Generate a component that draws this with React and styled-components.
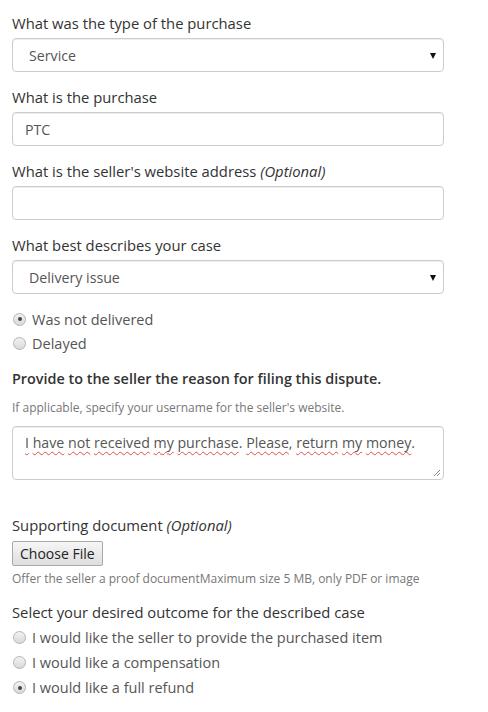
import React from 'react';
import styled, { createGlobalStyle } from 'styled-components';

const GlobalStyle = createGlobalStyle`
  body {
    margin: 0;
    background: #fff;
    font-family: "Open Sans", "Liberation Sans", sans-serif;
    color: #333;
  }
`;

const Form = styled.form`
  width: 432px;
  padding: 13px 12px 0;
  display: flex;
  flex-direction: column;
`;

const Group = styled.div`
  display: flex;
  flex-direction: column;
  margin-bottom: ${props => props.$mb ?? 15}px;
`;

const Label = styled.label`
  font-size: ${props => (props.$strong ? 14.4 : 14.8)}px;
  line-height: 20px;
  color: #333;
  margin-bottom: ${props => props.$mb ?? 5}px;
  font-weight: ${props => (props.$strong ? 600 : 400)};
  white-space: nowrap;
  em {
    font-style: italic;
  }
`;

const Field = styled.div`
  position: relative;
  height: 34px;
  box-sizing: border-box;
  border: 1px solid #ccc;
  border-radius: 4px;
  box-shadow: inset 0 1px 1px rgba(0, 0, 0, 0.075);
  display: flex;
  align-items: center;
  padding-left: ${props => (props.$select ? 16 : 12)}px;
  font-size: 14.2px;
  color: #555;
`;

const Arrow = styled.span`
  position: absolute;
  right: 7px;
  top: 14px;
  width: 0;
  height: 0;
  border-left: 3.5px solid transparent;
  border-right: 3.5px solid transparent;
  border-top: 6px solid #111;
`;

const TextArea = styled.div`
  position: relative;
  height: 54px;
  box-sizing: border-box;
  border: 1px solid #ccc;
  border-radius: 4px;
  box-shadow: inset 0 1px 1px rgba(0, 0, 0, 0.075);
  padding: 6px 12px;
  font-size: 14.2px;
  line-height: 20px;
  color: #555;
  white-space: nowrap;
`;

const Misspelled = styled.span`
  text-decoration: underline wavy #e05050;
  text-decoration-thickness: 1px;
  text-underline-offset: 3px;
`;

const Grip = styled.svg`
  position: absolute;
  right: 2px;
  bottom: 2px;
`;

const Help = styled.p`
  margin: 0 0 ${props => props.$mb ?? 0}px;
  font-size: 12px;
  line-height: 18px;
  color: #777;
  white-space: nowrap;
`;

const RadioRow = styled.label`
  display: flex;
  align-items: center;
  gap: 6px;
  height: ${props => props.$h ?? 24}px;
  font-size: 14.5px;
  color: #555;
  padding-left: 1px;
  white-space: nowrap;
`;

const Radio = styled.span`
  flex: none;
  width: 11px;
  height: 11px;
  border-radius: 50%;
  border: 1px solid #b4b4b4;
  background: linear-gradient(#f2f2f2, #d9d9d9);
  display: flex;
  align-items: center;
  justify-content: center;
  &::after {
    content: '';
    width: 4px;
    height: 4px;
    border-radius: 50%;
    background: ${props => (props.$checked ? '#444' : 'transparent')};
  }
`;

const FileButton = styled.button`
  align-self: flex-start;
  height: 25px;
  padding: 0 7px;
  font-family: "Open Sans", "Liberation Sans", sans-serif;
  font-size: 14px;
  color: #222;
  border: 1px solid #a9a9a9;
  border-radius: 2px;
  background: linear-gradient(#f6f6f6, #dedede);
  margin-bottom: 4px;
`;

const words = 'I have not received my purchase. Please, return my money.'.split(' ');

export default function App() {
  return (
    <>
      <GlobalStyle />
      <Form>
        <Group>
          <Label>What was the type of the purchase</Label>
          <Field $select>
            Service
            <Arrow />
          </Field>
        </Group>
        <Group>
          <Label>What is the purchase</Label>
          <Field>PTC</Field>
        </Group>
        <Group>
          <Label>
            What is the seller's website address <em>(Optional)</em>
          </Label>
          <Field />
        </Group>
        <Group $mb={13}>
          <Label>What best describes your case</Label>
          <Field $select>
            Delivery issue
            <Arrow />
          </Field>
        </Group>
        <Group $mb={14}>
          <RadioRow>
            <Radio $checked />
            Was not delivered
          </RadioRow>
          <RadioRow>
            <Radio />
            Delayed
          </RadioRow>
        </Group>
        <Group $mb={35}>
          <Label $strong $mb={10}>Provide to the seller the reason for filing this dispute.</Label>
          <Help $mb={9}>If applicable, specify your username for the seller's website.</Help>
          <TextArea>
            {words.map((w, i) => (
              <React.Fragment key={i}>
                <Misspelled>{w.replace(/[.,]$/, '')}</Misspelled>
                {/[.,]$/.test(w) ? w.slice(-1) : ''}
                {i < words.length - 1 ? ' ' : ''}
              </React.Fragment>
            ))}
            <Grip width="8" height="8" viewBox="0 0 8 8">
              <path d="M7 1 L1 7 M7 4 L4 7" stroke="#888" strokeWidth="1" />
            </Grip>
          </TextArea>
        </Group>
        <Group $mb={14}>
          <Label $mb={6}>
            Supporting document <em>(Optional)</em>
          </Label>
          <FileButton type="button">Choose File</FileButton>
          <Help>Offer the seller a proof documentMaximum size 5 MB, only PDF or image</Help>
        </Group>
        <Group>
          <Label $mb={3}>Select your desired outcome for the described case</Label>
          <RadioRow $h={25}>
            <Radio />
            I would like the seller to provide the purchased item
          </RadioRow>
          <RadioRow $h={25}>
            <Radio />
            I would like a compensation
          </RadioRow>
          <RadioRow $h={25}>
            <Radio $checked />
            I would like a full refund
          </RadioRow>
        </Group>
      </Form>
    </>
  );
}
